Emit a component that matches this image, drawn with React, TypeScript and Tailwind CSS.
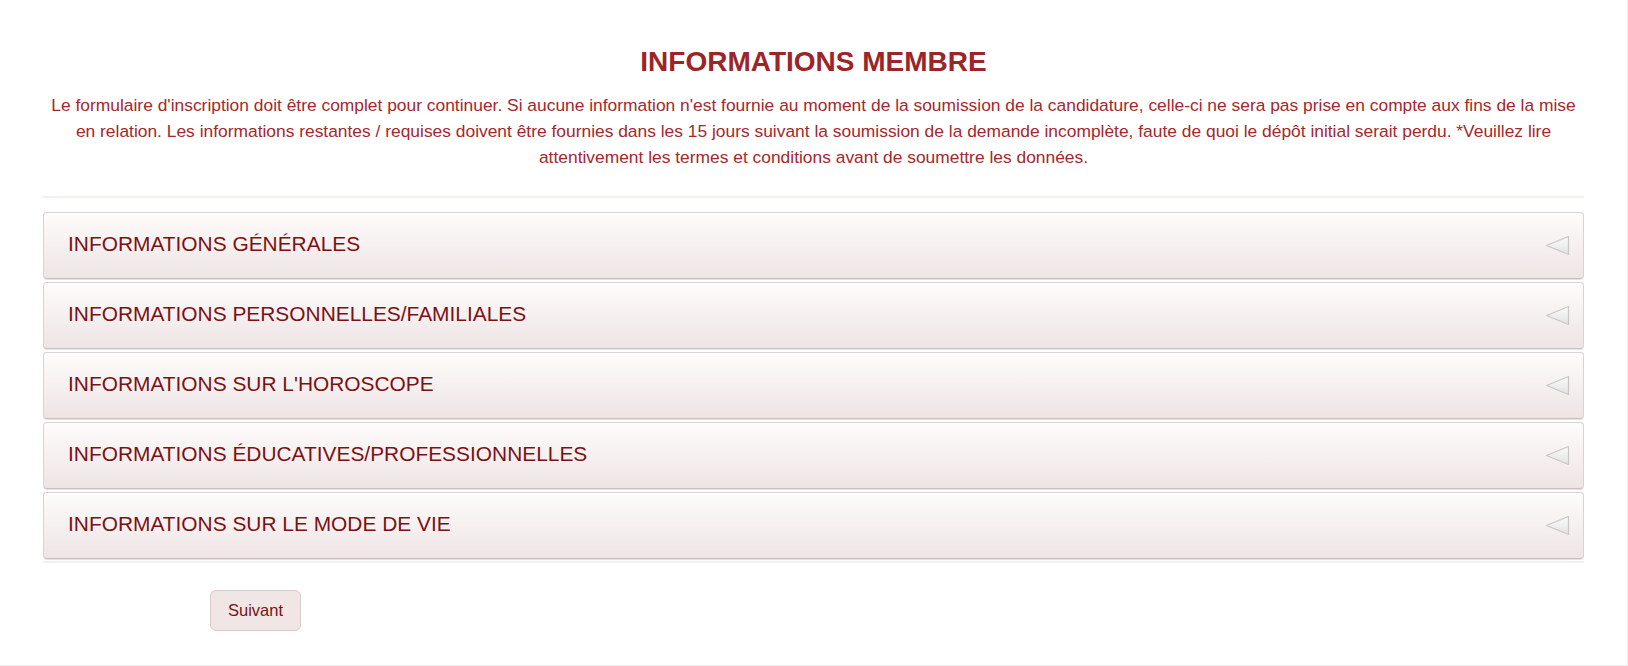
import React from "react";

const items = [
  "INFORMATIONS GÉNÉRALES",
  "INFORMATIONS PERSONNELLES/FAMILIALES",
  "INFORMATIONS SUR L'HOROSCOPE",
  "INFORMATIONS ÉDUCATIVES/PROFESSIONNELLES",
  "INFORMATIONS SUR LE MODE DE VIE",
];

function Tri() {
  return (
    <svg width="25" height="21" viewBox="0 0 25 21" className="shrink-0">
      <defs>
        <linearGradient id="tg" x1="0" y1="0" x2="0" y2="1">
          <stop offset="0" stopColor="#fbfbfb" />
          <stop offset="1" stopColor="#e2e2e2" />
        </linearGradient>
      </defs>
      <polygon points="1.5,10.5 23.5,1.5 23.5,19.5" fill="url(#tg)" stroke="#c9c6c6" strokeWidth="1.2" strokeLinejoin="round" />
    </svg>
  );
}

export default function App() {
  return (
    <div className="h-[666px] w-full border-r border-b border-[#ededed] bg-white font-['Liberation_Sans',Arial,sans-serif]">
      <div className="px-[43px] pt-[46px]">
        <h1 className="text-center text-[28px] font-bold leading-[31px] text-[#9c2528]">
          INFORMATIONS MEMBRE
        </h1>
        <p className="mt-[15px] px-[4px] text-center text-[17.4px] leading-[26px] text-[#a3292c]">
          Le formulaire d'inscription doit être complet pour continuer. Si aucune information n'est fournie au moment de la soumission de la candidature, celle-ci ne sera pas prise en compte aux fins de la mise en relation. Les informations restantes / requises doivent être fournies dans les 15 jours suivant la soumission de la demande incomplète, faute de quoi le dépôt initial serait perdu. *Veuillez lire attentivement les termes et conditions avant de soumettre les données.
        </p>
        <div className="mt-[26px] h-[2px] bg-[#f8ecec]" />
        <div className="mt-[14px] flex flex-col gap-[3px]">
          {items.map((t) => (
            <div
              key={t}
              className="flex h-[67px] items-center justify-between rounded-[4px] border border-[#dbd3d3] border-b-[#c8bfbf] bg-gradient-to-b from-[#fefcfc] to-[#eee4e4] pl-[24px] pr-[13px] shadow-[0_1px_0_#e9e2e2]"
            >
              <span className="pb-[4px] text-[20.9px] text-[#7a1113]">{t}</span>
              <Tri />
            </div>
          ))}
        </div>
        <div className="mt-[2px] h-[2px] bg-[#f8ecec]" />
        <button className="ml-[167px] mt-[27px] h-[41px] w-[91px] rounded-[6px] border border-[#dacaca] bg-[#f1e6e6] text-[16.5px] text-[#7a1113]">
          Suivant
        </button>
      </div>
    </div>
  );
}
